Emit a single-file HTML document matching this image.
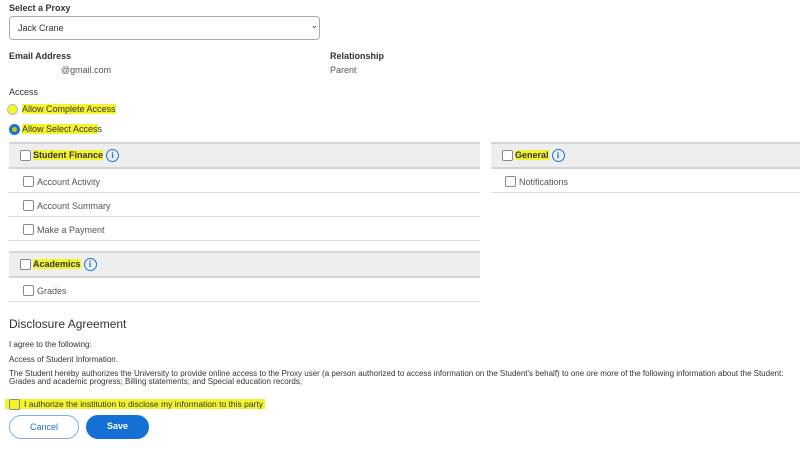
<!DOCTYPE html>
<html><head><style>
*{margin:0;padding:0;box-sizing:border-box}
body{width:800px;height:453px;background:#fff;font-family:"Liberation Sans",sans-serif;font-size:9px;color:#333;position:relative;overflow:hidden}
.a{position:absolute;white-space:nowrap}
.b{font-weight:bold}
.hl{background:#f4f42a}
.hdr{position:absolute;background:#eee;border-top:2px solid #d4d4d4;border-bottom:2px solid #d4d4d4}
.row{position:absolute;border-bottom:1px solid #ddd;height:24px}
.cb{position:absolute;width:11px;height:11px;border:1px solid #888;border-radius:2px;background:#fff}
.info{display:inline-block;vertical-align:middle;margin-left:3px;width:13px;height:13px;border:1.5px solid #1a73d6;border-radius:50%;color:#1a73d6;font-weight:bold;font-size:9px;text-align:center;line-height:10px;font-family:"Liberation Serif",serif}
.btn{position:absolute;height:24px;border-radius:12px;text-align:center;line-height:22px;font-size:9px}
</style></head><body>
<div class="a b" style="left:9px;top:3px">Select a Proxy</div>
<div class="a" style="left:9px;top:16px;width:311px;height:24px;border:1px solid #aaa;border-radius:4px"></div>
<div class="a" style="left:18px;top:23px">Jack Crane</div>
<div class="a" style="left:311px;top:21px;font-size:8px">⌄</div>
<div class="a b" style="left:9px;top:51px">Email Address</div>
<div class="a" style="left:61px;top:65px;color:#555">@gmail.com</div>
<div class="a b" style="left:330px;top:51px">Relationship</div>
<div class="a" style="left:330px;top:65px;color:#555">Parent</div>
<div class="a" style="left:9px;top:87px">Access</div>
<div class="a" style="left:7px;top:104px;width:11px;height:11px;border:1px solid #bbb;border-radius:50%;background:#f4f42a"></div>
<div class="a hl" style="left:22px;top:104px">Allow Complete Access</div>
<div class="a" style="left:9px;top:124px;width:11px;height:11px;border:3px solid #1a73d6;border-radius:50%;background:#c9c900"></div>
<div class="a" style="left:22px;top:124px"><span class="hl">Allow Select Acces</span>s</div>

<div class="hdr" style="left:9px;top:142px;width:471px;height:27px"></div>
<div class="cb" style="left:20px;top:150px"></div>
<div class="a b" style="left:33px;top:148px;line-height:15px"><span class="hl">Student Finance</span><span class="info">i</span></div>
<div class="row" style="left:9px;top:169px;width:471px"></div>
<div class="cb" style="left:23px;top:176px"></div><div class="a" style="left:37px;top:177px;color:#555">Account Activity</div>
<div class="row" style="left:9px;top:193px;width:471px"></div>
<div class="cb" style="left:23px;top:200px"></div><div class="a" style="left:37px;top:201px;color:#555">Account Summary</div>
<div class="row" style="left:9px;top:217px;width:471px"></div>
<div class="cb" style="left:23px;top:224px"></div><div class="a" style="left:37px;top:225px;color:#555">Make a Payment</div>

<div class="hdr" style="left:9px;top:251px;width:471px;height:27px"></div>
<div class="cb" style="left:20px;top:259px"></div>
<div class="a b" style="left:33px;top:257px;line-height:15px"><span class="hl">Academics</span><span class="info">i</span></div>
<div class="row" style="left:9px;top:278px;width:471px"></div>
<div class="cb" style="left:23px;top:285px"></div><div class="a" style="left:37px;top:286px;color:#555">Grades</div>

<div class="hdr" style="left:491px;top:142px;width:309px;height:27px"></div>
<div class="cb" style="left:502px;top:150px"></div>
<div class="a b" style="left:515px;top:148px;line-height:15px"><span class="hl">General</span><span class="info">i</span></div>
<div class="row" style="left:491px;top:169px;width:309px"></div>
<div class="cb" style="left:505px;top:176px"></div><div class="a" style="left:519px;top:177px;color:#555">Notifications</div>

<div class="a" style="left:9px;top:317px;font-size:12px">Disclosure Agreement</div>
<div class="a" style="left:9px;top:340px;font-size:8px">I agree to the following:</div>
<div class="a" style="left:9px;top:355px;font-size:8px">Access of Student Information.</div>
<div class="a" style="left:9px;top:370px;font-size:8px;line-height:8px">The Student hereby authorizes the University to provide online access to the Proxy user (a person authorized to access information on the Student's behalf) to one ore more of the following information about the Student:<br>Grades and academic progress; Billing statements; and Special education records;</div>
<div class="a hl" style="left:5px;top:399px;width:260px;height:10px"></div>
<div class="cb" style="left:9px;top:399px;background:transparent"></div>
<div class="a" style="left:24px;top:399px;font-size:8.5px;line-height:10px">I authorize the institution to disclose my information to this party</div>
<div class="btn" style="left:9px;top:415px;width:70px;border:1px solid #7aaee8;color:#1a73d6">Cancel</div>
<div class="btn b" style="left:86px;top:415px;width:63px;background:#1570d4;color:#fff">Save</div>
</body></html>
